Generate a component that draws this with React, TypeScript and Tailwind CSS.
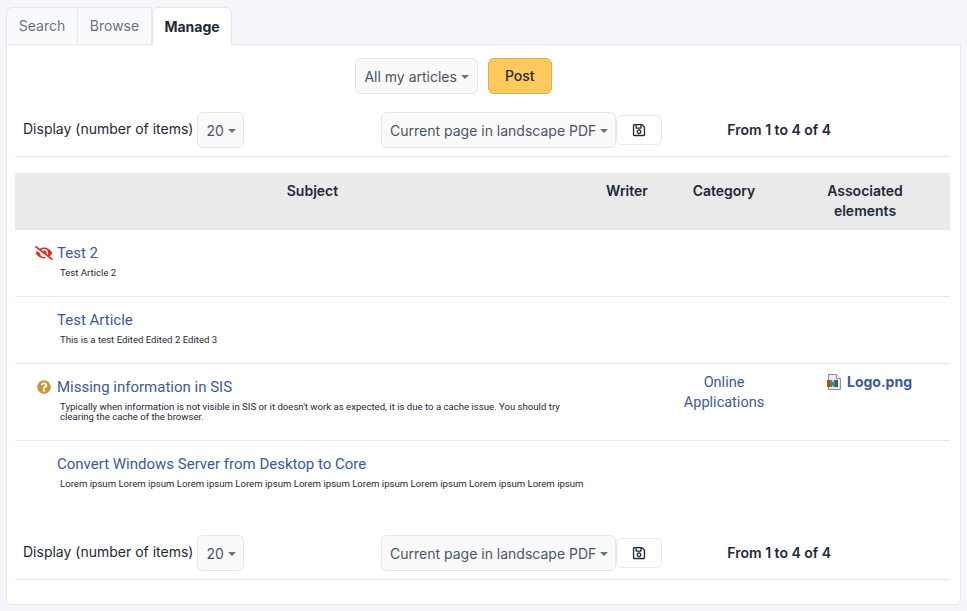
import React from 'react';
import { FaEyeSlash, FaQuestionCircle, FaRegSave } from 'react-icons/fa';

const Caret = () => (
    <span className="ml-1 h-0 w-0 border-x-4 border-t-4 border-x-transparent border-t-gray-500" />
);

const Select: React.FC<{ label: string; wide?: boolean }> = ({ label, wide }) => (
    <div className={`flex h-9 items-center rounded-md border border-neutral-200 bg-neutral-50 pt-0.5 pl-2 text-sm text-gray-600 ${wide ? 'pr-2' : 'pr-1.75'}`}>
        {label}
        <Caret />
    </div>
);

const Pager = () => (
    <div className="flex items-center border-b border-gray-200 py-2">
        <div className="flex w-[366px] items-center pl-2">
            <span className="mr-1 mb-0.5 text-sm text-gray-800">Display (number of items)</span>
            <Select label="20" />
        </div>
        <Select label="Current page in landscape PDF" />
        <button className="flex h-7.5 w-11.5 items-center justify-center rounded-md border border-gray-200 bg-white text-gray-800">
            <FaRegSave className="h-3.5 w-3.5" />
        </button>
        <span className="ml-16 pl-px text-sm font-semibold text-gray-800">From 1 to 4 of 4</span>
    </div>
);

const FileIcon = () => (
    <svg viewBox="0 0 16 16" className="h-4 w-4 shrink-0">
        <path d="M2.5 .5H10.5L14.5 4.5V15.5H2.5Z" fill="#e8e9f0" stroke="#8b8f9c" />
        <path d="M10.5 .5V4.5H14.5" fill="#fff" stroke="#8b8f9c" />
        <path d="M1 6H4V13H1Z" fill="#c2412d" />
        <path d="M4 6H6L7 9L8 6H9V13H7.5L7 11L6 13H4Z" fill="#3f8f4f" />
        <path d="M9 6H12V13H9Z" fill="#3554a5" />
    </svg>
);

interface Article {
    title: string;
    desc: string;
    icon?: React.ReactNode;
    category?: string;
    file?: string;
}

const articles: Article[] = [
    {
        title: 'Test 2',
        desc: 'Test Article 2',
        icon: <FaEyeSlash className="h-4.5 w-4.5 text-[#dc3226]" />,
    },
    { title: 'Test Article', desc: 'This is a test Edited Edited 2 Edited 3' },
    {
        title: 'Missing information in SIS',
        desc: "Typically when information is not visible in SIS or it doesn't work as expected, it is due to a cache issue. You should try clearing the cache of the browser.",
        icon: <FaQuestionCircle className="ml-0.5 h-3.5 w-3.5 text-[#c8973c]" />,
        category: 'Online Applications',
        file: 'Logo.png',
    },
    {
        title: 'Convert Windows Server from Desktop to Core',
        desc: 'Lorem ipsum Lorem ipsum Lorem ipsum Lorem ipsum Lorem ipsum Lorem ipsum Lorem ipsum Lorem ipsum Lorem ipsum',
    },
];

const columns = 'grid grid-cols-[591px_54px_128px_1fr]';

export default function App() {
    return (
        <div className="min-h-screen bg-[#f5f6fa] px-1.5 pt-1.5 font-['Inter',sans-serif]">
            {/* Tabs */}
            <div className="relative z-10 mt-px -mb-px flex h-9.5 text-sm text-gray-500">
                <div className="flex w-18 items-center justify-center rounded-tl-md border border-gray-200 bg-gray-50">
                    Search
                </div>
                <div className="flex w-18.5 items-center justify-center border-y border-r border-gray-200 bg-gray-50">
                    Browse
                </div>
                <div className="flex w-20 items-center justify-center rounded-t-md border-x border-t border-gray-200 bg-white font-bold text-gray-800">
                    Manage
                </div>
            </div>

            {/* Panel */}
            <div className="rounded-b-md border border-gray-200 bg-white pt-3 pr-2.5 pb-6 pl-2">
                <div className="mt-px mb-2.5 flex justify-center gap-2.5 pr-14.5">
                    <Select label="All my articles" wide />
                    <button className="h-9 rounded-md border border-[#e0ae50] bg-[#ffc95c] px-4 text-sm font-medium text-gray-800">
                        Post
                    </button>
                </div>

                <Pager />

                <div className={`${columns} mt-4 border-b border-neutral-200 bg-neutral-200/80 py-2 text-center text-sm leading-5 font-semibold text-gray-800`}>
                    <div className="pl-1">Subject</div>
                    <div className="pr-3">Writer</div>
                    <div>Category</div>
                    <div className="pr-8 pl-6">Associated elements</div>
                </div>

                {articles.map((a, i) => (
                    <div
                        key={a.title}
                        className={`${columns} font-['Roboto',sans-serif] ${i < articles.length - 1 ? 'border-b border-gray-200' : ''}`}
                    >
                        <div className="pt-3.25 pr-5 pb-4">
                            <div className="relative pl-10.5 text-[15px] leading-5 text-[#3c5a99]">
                                <span className="absolute top-0 bottom-0 left-5 flex items-center">{a.icon}</span>
                                {a.title}
                            </div>
                            <div className="mt-1.25 mb-0.5 ml-px pl-11 text-[9.6px] leading-2.5 text-gray-800">{a.desc}</div>
                        </div>
                        <div />
                        <div className="px-4 pt-2.25 text-center text-[14.5px] leading-5 text-[#3c5a99]">{a.category}</div>
                        <div className="pt-2 pl-9.5">
                            {a.file && (
                                <div className="flex items-center gap-1.25 font-['Inter',sans-serif] text-sm leading-5 font-bold text-[#3c5a99]">
                                    <FileIcon />
                                    {a.file}
                                </div>
                            )}
                        </div>
                    </div>
                ))}

                <div className="mt-5">
                    <Pager />
                </div>
            </div>
        </div>
    );
}
